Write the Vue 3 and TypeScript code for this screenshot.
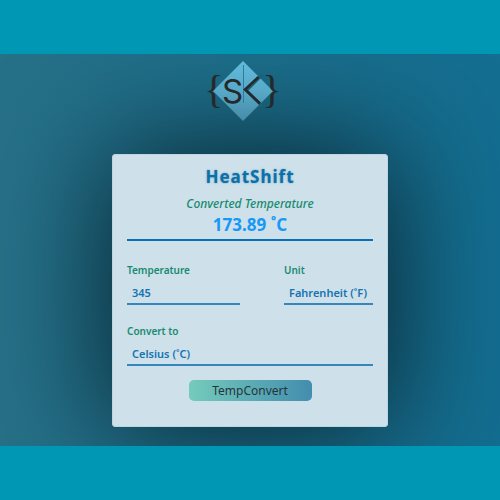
<script setup lang="ts">
import { computed, ref } from 'vue'

type Unit = 'C' | 'F' | 'K'

const units: { value: Unit; label: string; symbol: string }[] = [
  { value: 'C', label: 'Celsius (˚C)', symbol: '˚C' },
  { value: 'F', label: 'Fahrenheit (˚F)', symbol: '˚F' },
  { value: 'K', label: 'Kelvin (K)', symbol: 'K' },
]

const temperature = ref('345')
const fromUnit = ref<Unit>('F')
const toUnit = ref<Unit>('C')

function convert(value: number, from: Unit, to: Unit): number {
  const celsius = from === 'F' ? ((value - 32) * 5) / 9 : from === 'K' ? value - 273.15 : value
  if (to === 'F') return (celsius * 9) / 5 + 32
  return to === 'K' ? celsius + 273.15 : celsius
}

const converted = ref(convert(345, 'F', 'C'))
const shownUnit = ref<Unit>('C')
const result = computed(() => {
  const symbol = units.find((u) => u.value === shownUnit.value)?.symbol ?? ''
  return `${converted.value.toFixed(2)} ${symbol}`
})

function submit() {
  const value = Number(temperature.value)
  if (Number.isNaN(value)) return
  converted.value = convert(value, fromUnit.value, toUnit.value)
  shownUnit.value = toUnit.value
}
</script>

<template>
  <div class="page">
    <main class="stage">
      <svg class="logo" viewBox="0 0 72 60" aria-hidden="true">
        <defs>
          <linearGradient id="tile" x1="0" y1="0" x2="0" y2="1">
            <stop offset="0" stop-color="#62bbdc" />
            <stop offset="0.5" stop-color="#57a9c7" />
            <stop offset="1" stop-color="#478ba7" />
          </linearGradient>
        </defs>
        <path d="M36 0 66 30 36 60 6 30Z" fill="url(#tile)" />
        <path d="M55 14 39.500 29.500 55 45" fill="none" stroke="#1d5f75" stroke-width="3" />
        <path d="M36.500 4V42" stroke="#327b98" stroke-width="1" />
        <path d="M51.500 16 38 28.500 53 42.500" fill="none" stroke="#26292b" stroke-width="2.500" />
        <text class="initial" x="15" y="42">S</text>
        <text class="brace" x="-3" y="42">{</text>
        <text class="brace" x="55" y="42">}</text>
      </svg>

      <form class="card" @submit.prevent="submit">
        <h1>HeatShift</h1>
        <div class="result">
          <p class="caption">Converted Temperature</p>
          <output class="value">{{ result }}</output>
        </div>
        <div class="row">
          <div class="field amount">
            <label for="temperature">Temperature</label>
            <input id="temperature" v-model="temperature" type="text" inputmode="decimal" />
          </div>
          <div class="field unit">
            <label for="from">Unit</label>
            <select id="from" v-model="fromUnit">
              <option v-for="u in units" :key="u.value" :value="u.value">{{ u.label }}</option>
            </select>
          </div>
        </div>
        <div class="field">
          <label for="to">Convert to</label>
          <select id="to" v-model="toUnit">
            <option v-for="u in units" :key="u.value" :value="u.value">{{ u.label }}</option>
          </select>
        </div>
        <button type="submit">TempConvert</button>
      </form>
    </main>
  </div>
</template>

<style>
body {
  margin: 0;
  background: #0097b5;
}
</style>

<style scoped>
.page {
  min-height: 100vh;
  display: flex;
  flex-direction: column;
  justify-content: center;
  font-family: 'Trebuchet MS', 'Noto Sans', 'Open Sans', sans-serif;
}

.stage {
  display: flex;
  flex-direction: column;
  align-items: center;
  gap: 33px;
  padding: 7px 16px 19px;
  overflow: hidden;
  background: linear-gradient(90deg, #277188, #136e91);
}

.logo {
  position: relative;
  z-index: 1;
  width: 72px;
  height: 60px;
  margin-right: 14px;
  overflow: visible;
}

.initial {
  font: 400 33px Inter, sans-serif;
  fill: #26292b;
}

.brace {
  font: 400 41px 'Liberation Serif', serif;
  fill: #26292b;
}

.card {
  box-sizing: border-box;
  width: 100%;
  max-width: 276px;
  display: flex;
  flex-direction: column;
  padding: 10px 14px 25px;
  border: 1px solid #bcd5df;
  border-radius: 3px;
  background: #cee0ea;
  box-shadow: 0 0 120px 5px #08232e;
}

h1 {
  margin: 0 0 7px;
  font-size: 17px;
  line-height: 24px;
  font-weight: 700;
  letter-spacing: 1px;
  text-align: center;
  color: #0871ae;
  text-shadow: 0 0 2px #6f9aa8;
}

.result {
  display: flex;
  flex-direction: column;
  gap: 3px;
  margin-bottom: 21px;
  padding-bottom: 4px;
  border-bottom: 2px solid #0871b4;
  text-align: center;
}

.caption {
  margin: 0;
  font-size: 12px;
  line-height: 16px;
  font-weight: 500;
  font-style: italic;
  color: #168b70;
}

.value {
  font-size: 17px;
  line-height: 20px;
  font-weight: 700;
  color: #1698f7;
}

.row {
  display: flex;
  justify-content: space-between;
  margin-bottom: 18px;
}

.field {
  display: flex;
  flex-direction: column;
  gap: 5px;
}

.amount {
  width: 46%;
}

label {
  font-size: 10px;
  line-height: 16px;
  font-weight: 600;
  color: #168b70;
}

input,
select {
  box-sizing: border-box;
  width: 100%;
  height: 22px;
  margin: 0;
  padding: 0 5px 2px;
  appearance: none;
  border: 0;
  border-bottom: 2px solid #3586bc;
  border-radius: 0;
  outline: none;
  background: transparent;
  font: inherit;
  font-size: 11px;
  font-weight: 600;
  color: #1673b1;
}

button {
  align-self: center;
  width: 50%;
  height: 21px;
  margin-top: 14px;
  padding: 0;
  border: 0;
  border-radius: 5px;
  background: linear-gradient(90deg, #75cbbb, #438dae);
  font: inherit;
  font-size: 12px;
  line-height: 20px;
  color: #26353a;
  cursor: pointer;
}
</style>
